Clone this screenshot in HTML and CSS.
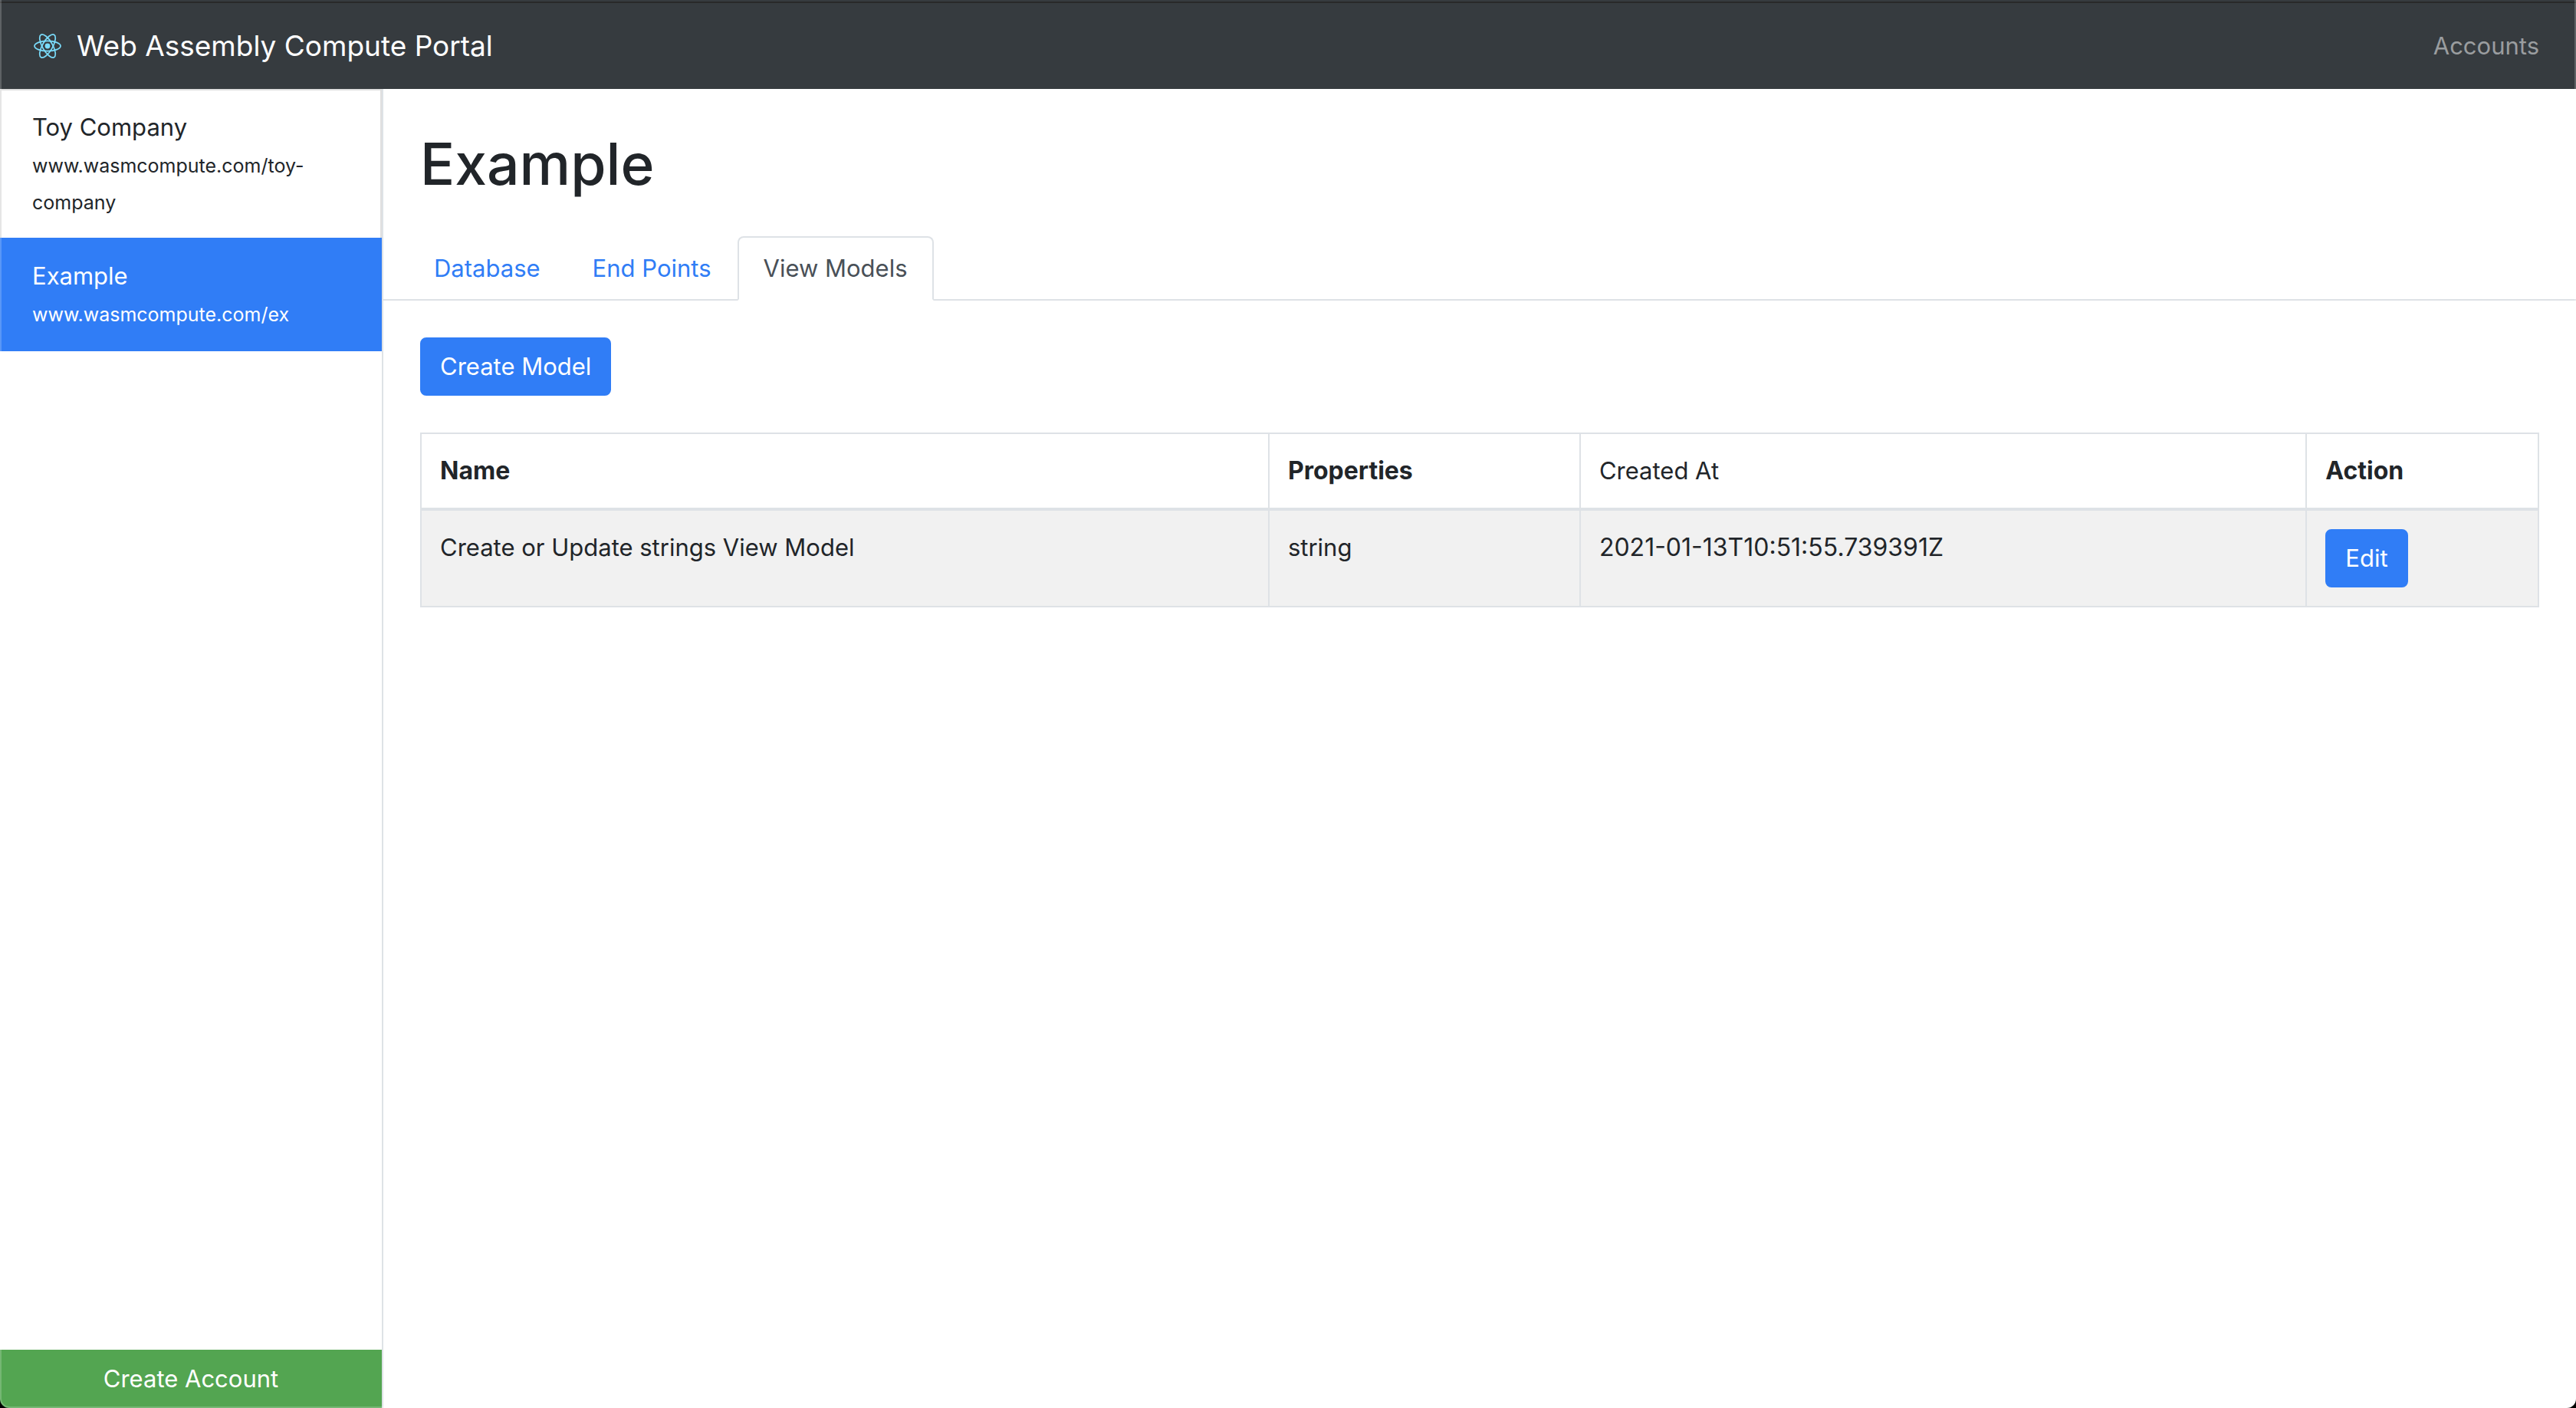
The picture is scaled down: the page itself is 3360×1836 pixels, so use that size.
FILE: index.html
```html
<!DOCTYPE html>
<html lang="en">
<head>
<meta charset="utf-8">
<title>Web Assembly Compute Portal</title>
<link rel="stylesheet" href="styles.css">
</head>
<body>
<header class="navbar">
  <a class="brand" href="#">
    <svg class="brand-logo" viewBox="0 0 36 34" aria-hidden="true">
      <g fill="none" stroke="#7adcfb" stroke-width="1.7">
        <ellipse cx="18" cy="17" rx="17" ry="6.6"/>
        <ellipse cx="18" cy="17" rx="17" ry="6.6" transform="rotate(60 18 17)"/>
        <ellipse cx="18" cy="17" rx="17" ry="6.6" transform="rotate(120 18 17)"/>
      </g>
      <circle cx="18" cy="17" r="3.4" fill="#7adcfb"/>
    </svg>
    <span>Web Assembly Compute Portal</span>
  </a>
  <a class="nav-link" href="#">Accounts</a>
</header>
<div class="layout">
  <aside class="sidebar">
    <nav class="list-group">
      <a class="list-item" href="#">Toy Company<br><small>www.wasmcompute.com/toy-company</small></a>
      <a class="list-item active" href="#" aria-current="true">Example<br><small>www.wasmcompute.com/ex</small></a>
    </nav>
    <button class="btn btn-success" type="button">Create Account</button>
  </aside>
  <main class="content">
    <h1>Example</h1>
    <nav class="tabs">
      <a class="tab" href="#">Database</a>
      <a class="tab" href="#">End Points</a>
      <a class="tab active" href="#" aria-current="page">View Models</a>
    </nav>
    <section class="panel">
      <button class="btn btn-primary" type="button">Create Model</button>
      <table class="table">
        <colgroup><col class="col-name"><col class="col-properties"><col class="col-created"><col class="col-action"></colgroup>
        <thead>
          <tr><th scope="col">Name</th><th scope="col">Properties</th><td>Created At</td><th scope="col">Action</th></tr>
        </thead>
        <tbody>
          <tr>
            <td>Create or Update strings View Model</td>
            <td>string</td>
            <td class="timestamp">2021-01-13T10:51:55.739391Z</td>
            <td><button class="btn btn-primary" type="button">Edit</button></td>
          </tr>
        </tbody>
      </table>
    </section>
  </main>
</div>
<div class="window-frame" aria-hidden="true"></div>
</body>
</html>
```
FILE: styles.css
```css
* { box-sizing: border-box; }

body {
  margin: 0;
  min-height: 100vh;
  display: flex;
  flex-direction: column;
  overflow: hidden;
  background: #fff;
  color: #212529;
  font: 31px/48px Inter, "Liberation Sans", sans-serif;
}

a { color: #307df6; text-decoration: none; }

.navbar {
  height: 116px;
  padding: 4px 48px 0 44px;
  display: flex;
  align-items: center;
  justify-content: space-between;
  background: linear-gradient(#363b3f 2px, #292929 2px, #292929 4px, #363b3f 4px);
}

.brand {
  display: flex;
  align-items: center;
  gap: 20px;
  color: #fff;
  font-size: 37px;
}

.brand-logo { width: 36px; height: 34px; }

.nav-link { color: #9a9d9f; }

.layout { flex: 1; display: flex; }

.sidebar {
  width: 500px;
  flex: none;
  display: flex;
  flex-direction: column;
  justify-content: space-between;
  border-right: 2px solid #dee2e6;
}

.list-group { display: flex; flex-direction: column; }

.list-item {
  padding: 24px 40px;
  border: 2px solid #dfdfdf;
  border-bottom: 0;
  color: #212529;
}

.list-item small { font-size: 25px; line-height: 32px; }

.list-item.active {
  background: #307df6;
  border: 2px solid #307df6;
  color: #fff;
}

.btn {
  height: 76px;
  padding: 12px 24px;
  border: 2px solid transparent;
  border-radius: 8px;
  color: #fff;
  font: inherit;
}

.btn-primary { display: block; background: #307df6; border-color: #307df6; }

.btn-success { background: #53a551; border-color: #53a551; border-radius: 0; }

.content { flex: 1; min-width: 0; }

h1 {
  margin: 50px 48px 0;
  font-size: 75px;
  line-height: 96px;
  font-weight: 500;
}

.tabs {
  margin-top: 46px;
  padding: 0 32px;
  display: flex;
  border-bottom: 2px solid #dee2e6;
}

.tab {
  margin-bottom: -2px;
  padding: 16px 32px;
  border: 2px solid transparent;
  border-radius: 8px 8px 0 0;
}

.tab.active {
  background: #fff;
  border-color: #dee2e6 #dee2e6 #fff;
  color: #495057;
}

.panel { padding: 48px; }

.table {
  width: 100%;
  margin-top: 48px;
  border-collapse: collapse;
  table-layout: fixed;
}

.col-name { width: 40.04%; }
.col-properties { width: 14.7%; }
.col-created { width: 34.3%; }
.col-action { width: 10.96%; }

.table th,
.table td {
  padding: 24px;
  border: 2px solid #dee2e6;
  text-align: left;
  vertical-align: top;
}

.table th { font-size: 32px; font-weight: 700; }

.table .timestamp { font-size: 32px; }

.table thead th,
.table thead td { border-bottom-width: 4px; }

.table tbody tr { background: #f1f1f1; }

.window-frame {
  position: fixed;
  inset: 0;
  border: 2px solid rgba(255, 255, 255, 0.2);
  border-top: 0;
  border-radius: 0 0 12px 12px;
  box-shadow: 0 0 0 12px #000;
  pointer-events: none;
}
```
